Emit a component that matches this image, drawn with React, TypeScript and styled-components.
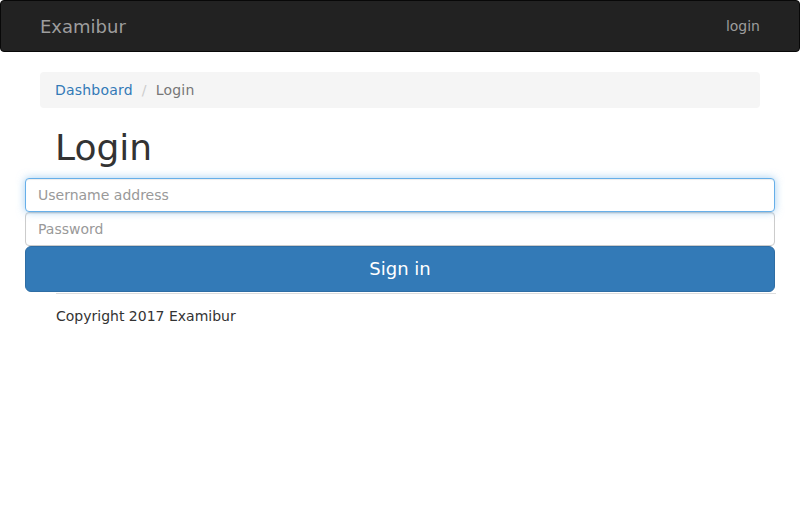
import React from "react";
import styled, { createGlobalStyle } from "styled-components";

const Global = createGlobalStyle`
  * { box-sizing: border-box; }
  html, body { margin: 0; padding: 0; background: #fff; }
  body {
    font-family: "DejaVu Sans", "Helvetica Neue", Arial, sans-serif;
    font-size: 14px;
    line-height: 1.42857143;
    color: #333;
  }
`;

const Navbar = styled.nav`
  height: 52px;
  background: #222;
  border: 1px solid #080808;
  border-radius: 4px;
  margin-bottom: 20px;
`;

const NavInner = styled.div`
  width: 750px;
  margin: 0 auto;
  padding: 0 15px;
  height: 50px;
  display: flex;
  align-items: center;
  justify-content: space-between;
`;

const Brand = styled.a`
  font-size: 18px;
  line-height: 20px;
  padding-top: 2px;
  color: #9d9d9d;
  text-decoration: none;
`;

const NavLink = styled.a`
  font-size: 14px;
  line-height: 20px;
  color: #9d9d9d;
  text-decoration: none;
`;

const Container = styled.div`
  width: 750px;
  margin: 0 auto;
  padding: 0 15px;
`;

const Breadcrumb = styled.ol`
  list-style: none;
  margin: 0 0 20px;
  padding: 8px 15px;
  background: #f5f5f5;
  border-radius: 4px;
  display: flex;
  align-items: center;
`;

const Crumb = styled.li<{ $active?: boolean }>`
  color: ${(p) => (p.$active ? "#777" : "#337ab7")};
  letter-spacing: 0.2px;
  &:not(:first-child)::before {
    content: "/";
    padding: 0 9px;
    color: #ccc;
  }
`;

const CrumbLink = styled.a`
  color: #337ab7;
  text-decoration: none;
`;

const Title = styled.h1`
  font-size: 36px;
  font-weight: 500;
  line-height: 1.1;
  margin: 0 0 10px;
  padding-left: 15px;
  color: #333;
`;

const Form = styled.form`
  margin: 0 -15px;
  display: flex;
  flex-direction: column;
`;

const Input = styled.input<{ $focus?: boolean }>`
  display: block;
  width: 100%;
  height: 34px;
  padding: 6px 12px;
  font-family: inherit;
  font-size: 14px;
  line-height: 1.42857143;
  color: #555;
  background: #fff;
  border: 1px solid ${(p) => (p.$focus ? "#66afe9" : "#ccc")};
  border-radius: 4px;
  outline: none;
  box-shadow: ${(p) =>
    p.$focus
      ? "inset 0 1px 1px rgba(0,0,0,.075), 0 0 8px rgba(102,175,233,.6)"
      : "inset 0 1px 1px rgba(0,0,0,.075)"};
  position: relative;
  z-index: ${(p) => (p.$focus ? 2 : 1)};
  &::placeholder { color: #999; }
`;

const Button = styled.button`
  display: block;
  width: 100%;
  height: 46px;
  padding: 10px 16px;
  font-family: inherit;
  font-size: 18px;
  line-height: 1.3333333;
  color: #fff;
  background: #337ab7;
  border: 1px solid #2e6da4;
  border-radius: 6px;
  cursor: pointer;
`;

const Footer = styled.footer`
  padding-left: 16px;
  margin-right: -16px;
`;

const Rule = styled.hr`
  margin: 1px 0 12px;
  border: 0;
  border-top: 1px solid #ddd;
`;

const FooterText = styled.p`
  margin: 0;
  color: #333;
`;

export default function App() {
  return (
    <>
      <Global />
      <Navbar>
        <NavInner>
          <Brand href="#">Examibur</Brand>
          <NavLink href="#">login</NavLink>
        </NavInner>
      </Navbar>
      <Container>
        <Breadcrumb>
          <Crumb>
            <CrumbLink href="#">Dashboard</CrumbLink>
          </Crumb>
          <Crumb $active>Login</Crumb>
        </Breadcrumb>
        <Title>Login</Title>
        <Form onSubmit={(e) => e.preventDefault()}>
          <Input $focus placeholder="Username address" autoFocus />
          <Input type="password" placeholder="Password" />
          <Button type="submit">Sign in</Button>
        </Form>
        <Footer>
          <Rule />
          <FooterText>Copyright 2017 Examibur</FooterText>
        </Footer>
      </Container>
    </>
  );
}
